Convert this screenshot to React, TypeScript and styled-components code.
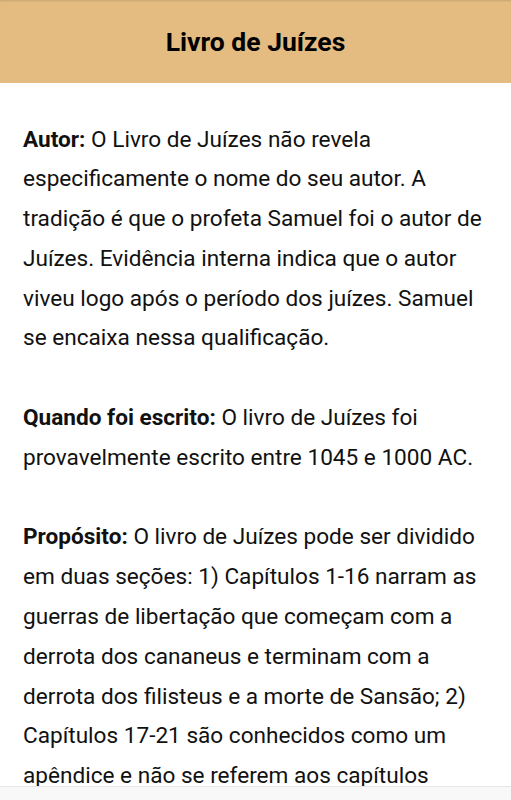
import styled, { createGlobalStyle } from "styled-components";

const Global = createGlobalStyle`
  html, body {
    margin: 0;
    padding: 0;
    background: #ffffff;
    font-family: Roboto, "Noto Sans", sans-serif;
  }
`;

const Page = styled.div`
  height: 800px;
  display: flex;
  flex-direction: column;
  overflow: hidden;
`;

const Header = styled.header`
  height: 83px;
  flex: none;
  background-color: #e4bb81;
  box-shadow: inset 0 2px 2px -1px rgba(0, 0, 0, 0.12);
  display: flex;
  align-items: center;
  justify-content: center;
  h1 {
    margin: 0;
    font-size: 26.5px;
    font-weight: 700;
    color: #000;
  }
`;

const Content = styled.main`
  flex: 1;
  overflow: hidden;
  padding: 36.5px 23px 0;
  color: #111;
  font-size: 22.6px;
  line-height: 39.8px;
`;

const Section = styled.p`
  margin: 0 0 39.8px;
  b {
    font-weight: 700;
  }
`;

const BottomBar = styled.div`
  height: 13px;
  flex: none;
  background-color: #f8f8f8;
  border-top: 1px solid #e6e6e6;
`;

const sections = [
  {
    label: "Autor:",
    text: "O Livro de Juízes não revela especificamente o nome do seu autor. A tradição é que o profeta Samuel foi o autor de Juízes. Evidência interna indica que o autor viveu logo após o período dos juízes. Samuel se encaixa nessa qualificação.",
  },
  {
    label: "Quando foi escrito:",
    text: "O livro de Juízes foi provavelmente escrito entre 1045 e 1000 AC.",
  },
  {
    label: "Propósito:",
    text: "O livro de Juízes pode ser dividido em duas seções: 1) Capítulos 1-16 narram as guerras de libertação que começam com a derrota dos cananeus e terminam com a derrota dos filisteus e a morte de Sansão; 2) Capítulos 17-21 são conhecidos como um apêndice e não se referem aos capítulos anteriores.",
  },
];

const App = () => {
  return (
    <Page>
      <Global />
      <Header>
        <h1>Livro de Juízes</h1>
      </Header>
      <Content>
        {sections.map((s) => (
          <Section key={s.label}>
            <b>{s.label}</b> {s.text}
          </Section>
        ))}
      </Content>
      <BottomBar />
    </Page>
  );
};

export default App;
